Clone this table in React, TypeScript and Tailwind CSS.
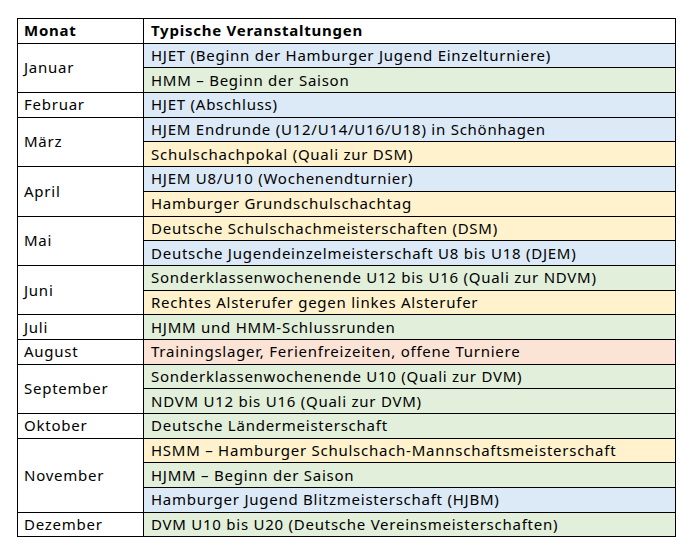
import React from "react";

type Row = { month?: string; span?: number; text: string; color: string };

const blue = "bg-[#dce9f6]";
const green = "bg-[#e2efda]";
const orange = "bg-[#fff2cc]";
const rose = "bg-[#fbe3d6]";

const rows: Row[] = [
  { month: "Januar", span: 2, text: "HJET (Beginn der Hamburger Jugend Einzelturniere)", color: blue },
  { text: "HMM – Beginn der Saison", color: green },
  { month: "Februar", text: "HJET (Abschluss)", color: blue },
  { month: "März", span: 2, text: "HJEM Endrunde (U12/U14/U16/U18) in Schönhagen", color: blue },
  { text: "Schulschachpokal (Quali zur DSM)", color: orange },
  { month: "April", span: 2, text: "HJEM U8/U10 (Wochenendturnier)", color: blue },
  { text: "Hamburger Grundschulschachtag", color: orange },
  { month: "Mai", span: 2, text: "Deutsche Schulschachmeisterschaften (DSM)", color: orange },
  { text: "Deutsche Jugendeinzelmeisterschaft U8 bis U18 (DJEM)", color: blue },
  { month: "Juni", span: 2, text: "Sonderklassenwochenende U12 bis U16 (Quali zur NDVM)", color: green },
  { text: "Rechtes Alsterufer gegen linkes Alsterufer", color: orange },
  { month: "Juli", text: "HJMM und HMM-Schlussrunden", color: green },
  { month: "August", text: "Trainingslager, Ferienfreizeiten, offene Turniere", color: rose },
  { month: "September", span: 2, text: "Sonderklassenwochenende U10 (Quali zur DVM)", color: green },
  { text: "NDVM U12 bis U16 (Quali zur DVM)", color: green },
  { month: "Oktober", text: "Deutsche Ländermeisterschaft", color: green },
  { month: "November", span: 3, text: "HSMM – Hamburger Schulschach-Mannschaftsmeisterschaft", color: orange },
  { text: "HJMM – Beginn der Saison", color: green },
  { text: "Hamburger Jugend Blitzmeisterschaft (HJBM)", color: blue },
  { month: "Dezember", text: "DVM U10 bis U20 (Deutsche Vereinsmeisterschaften)", color: green },
];

const App = () => {
  return (
    <main className="w-[695px] h-[558px] bg-white pt-[18px] pl-[17px] font-['Noto_Sans',sans-serif] text-[15px] tracking-[0.75px] text-black">
      <table className="w-[659px] border-collapse border border-black">
        <thead>
          <tr className="h-[24.7px]">
            <th className="w-[126px] border border-black px-[6px] text-left font-bold leading-none">Monat</th>
            <th className="border border-black px-[7px] text-left font-bold leading-none">Typische Veranstaltungen</th>
          </tr>
        </thead>
        <tbody>
          {rows.map((r, i) => (
            <tr key={i} className="h-[24.7px]">
              {r.month && (
                <td rowSpan={r.span ?? 1} className="border border-black px-[6px] leading-none">
                  {r.month}
                </td>
              )}
              <td className={`border border-black px-[7px] leading-none ${r.color}`}>{r.text}</td>
            </tr>
          ))}
        </tbody>
      </table>
    </main>
  );
};

export default App;
